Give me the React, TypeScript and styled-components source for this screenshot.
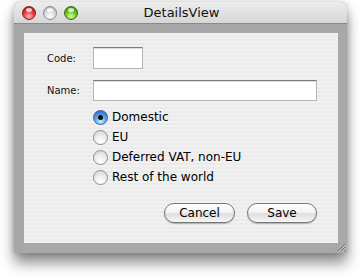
import React from "react";
import styled, { createGlobalStyle, css } from "styled-components";

const Global = createGlobalStyle`
  html, body { margin: 0; padding: 0; background: #ffffff; }
  body { font-family: "DejaVu Sans", "Liberation Sans", sans-serif; }
`;

const Page = styled.div`
  width: 361px;
  height: 277px;
  padding: 2px 0 0 14px;
  box-sizing: border-box;
`;

const Window = styled.div`
  width: 333px;
  height: 251px;
  display: flex;
  flex-direction: column;
  border-radius: 6px 6px 0 0;
  background: #a8a8a8;
  box-shadow: 0 10px 14px rgba(0, 0, 0, 0.45), 0 0 6px rgba(0, 0, 0, 0.2);
  position: relative;
`;

const TitleBar = styled.div`
  height: 21px;
  flex: none;
  display: flex;
  align-items: center;
  padding-left: 8px;
  border-radius: 6px 6px 0 0;
  background: linear-gradient(#ededed, #d6d6d6);
  border-bottom: 1px solid #8a8a8a;
  position: relative;
`;

const Lights = styled.div`
  display: flex;
  gap: 7px;
  margin-top: 1px;
`;

const Light = styled.span<{ $c: "red" | "gray" | "green" }>`
  width: 14px;
  height: 14px;
  border-radius: 50%;
  box-sizing: border-box;
  ${({ $c }) =>
    $c === "red"
      ? css`
          background: radial-gradient(circle at 50% 78%, #ffb8b8 0%, #e43a3a 48%, #a30c0c 100%);
          border: 1px solid #8d1a1a;
        `
      : $c === "green"
      ? css`
          background: radial-gradient(circle at 50% 78%, #dcffa4 0%, #6ac322 48%, #2f7a06 100%);
          border: 1px solid #3a6d14;
        `
      : css`
          background: radial-gradient(circle at 50% 78%, #ffffff 0%, #dcdcdc 48%, #a6a6a6 100%);
          border: 1px solid #8c8c8c;
        `}
  position: relative;
  &::after {
    content: "";
    position: absolute;
    left: 3px;
    top: 1px;
    width: 6px;
    height: 4px;
    border-radius: 50%;
    background: rgba(255, 255, 255, 0.75);
  }
`;

const Title = styled.div`
  position: absolute;
  left: 0;
  right: 0;
  top: 0;
  bottom: 0;
  display: flex;
  align-items: center;
  justify-content: center;
  font-size: 13px;
  color: #111;
  padding-left: 2px;
  pointer-events: none;
`;

const Frame = styled.div`
  flex: 1;
  padding: 9px 9px 10px 10px;
  display: flex;
`;

const Content = styled.div`
  flex: 1;
  background: repeating-linear-gradient(#f1f1f1 0 2px, #ebebeb 2px 4px);
  padding: 14px 21px 0 23px;
  display: flex;
  flex-direction: column;
`;

const FormGrid = styled.div`
  display: grid;
  grid-template-columns: 46px 1fr;
  row-gap: 11px;
  align-items: center;
`;

const Label = styled.label`
  font-size: 10px;
  color: #111;
`;

const Field = styled.div<{ $w?: number; $h: number }>`
  width: ${({ $w }) => ($w ? `${$w}px` : "auto")};
  height: ${({ $h }) => $h}px;
  box-sizing: border-box;
  background: #fff;
  border: 1px solid #b4b4b4;
  border-top-color: #7c7c7c;
  box-shadow: inset 0 1px 0 #dcdcdc;
`;

const Radios = styled.div`
  display: flex;
  flex-direction: column;
  margin-left: 46px;
  margin-top: 6px;
`;

const RadioRow = styled.div`
  height: 20px;
  display: flex;
  align-items: center;
  gap: 4px;
  font-size: 12px;
  color: #000;
`;

const Radio = styled.span<{ $on?: boolean }>`
  width: 15px;
  height: 15px;
  border-radius: 50%;
  box-sizing: border-box;
  position: relative;
  flex: none;
  ${({ $on }) =>
    $on
      ? css`
          border: 1px solid #3a5c9a;
          background: radial-gradient(circle at 50% 80%, #c9f0ff 0%, #5aa5e8 45%, #1e5fbe 100%);
          &::before {
            content: "";
            position: absolute;
            left: 4px;
            top: 4px;
            width: 5px;
            height: 5px;
            border-radius: 50%;
            background: #111;
          }
        `
      : css`
          border: 1px solid #8e8e8e;
          background: radial-gradient(circle at 50% 85%, #ffffff 0%, #f2f2f2 40%, #d2d2d2 100%);
        `}
`;

const Buttons = styled.div`
  display: flex;
  justify-content: flex-end;
  gap: 12px;
  margin-top: 16px;
`;

const Button = styled.button<{ $w: number }>`
  width: ${({ $w }) => $w}px;
  height: 20px;
  box-sizing: border-box;
  border-radius: 10px;
  border: 1px solid #777;
  background: linear-gradient(#ffffff 0%, #f4f4f4 45%, #dedede 55%, #f6f6f6 100%);
  box-shadow: 0 1px 1px rgba(0, 0, 0, 0.25);
  font-family: "DejaVu Sans", sans-serif;
  font-size: 12px;
  color: #000;
  padding: 0;
  line-height: 18px;
`;

const Grip = styled.svg`
  position: absolute;
  right: 1px;
  bottom: 1px;
`;

export default function App() {
  return (
    <>
      <Global />
      <Page>
        <Window>
          <TitleBar>
            <Lights>
              <Light $c="red" />
              <Light $c="gray" />
              <Light $c="green" />
            </Lights>
            <Title>DetailsView</Title>
          </TitleBar>
          <Frame>
            <Content>
              <FormGrid>
                <Label>Code:</Label>
                <Field $w={50} $h={22} />
                <Label>Name:</Label>
                <Field $h={21} />
              </FormGrid>
              <Radios>
                <RadioRow>
                  <Radio $on />
                  Domestic
                </RadioRow>
                <RadioRow>
                  <Radio />
                  EU
                </RadioRow>
                <RadioRow>
                  <Radio />
                  Deferred VAT, non-EU
                </RadioRow>
                <RadioRow>
                  <Radio />
                  Rest of the world
                </RadioRow>
              </Radios>
              <Buttons>
                <Button $w={71}>Cancel</Button>
                <Button $w={70}>Save</Button>
              </Buttons>
            </Content>
          </Frame>
          <Grip width="10" height="10" viewBox="0 0 10 10">
            <path d="M9 2 L2 9 M9 5 L5 9 M9 8 L8 9" stroke="#6e6e6e" strokeWidth="1" />
            <path d="M9.8 2.8 L2.8 9.8 M9.8 5.8 L5.8 9.8" stroke="#d8d8d8" strokeWidth="0.8" />
          </Grip>
        </Window>
      </Page>
    </>
  );
}
